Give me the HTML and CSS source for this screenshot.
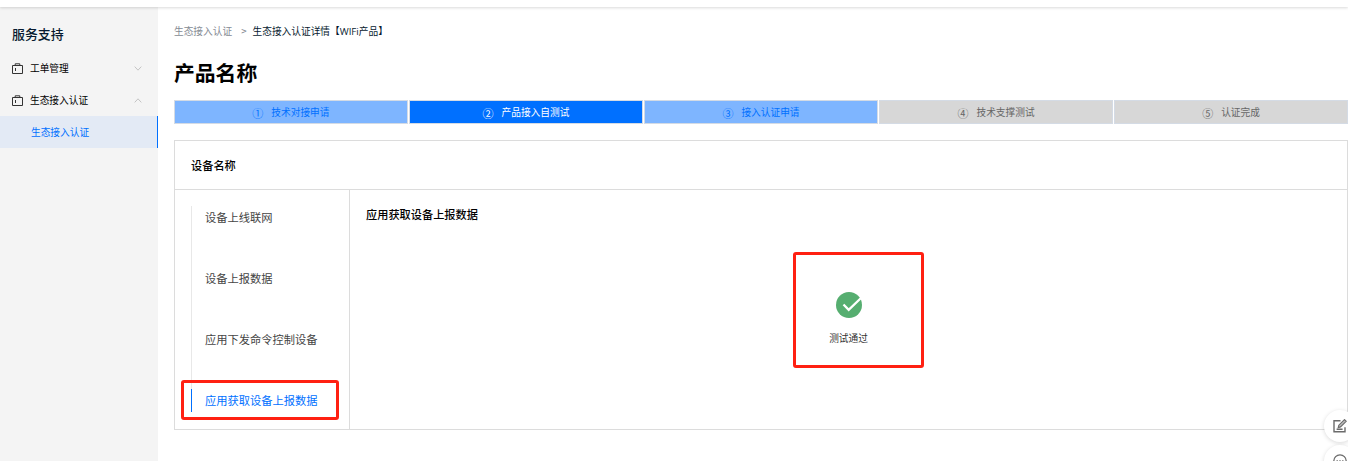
FILE: index.html
```html
<!DOCTYPE html>
<html lang="zh-CN">
<head>
<meta charset="utf-8">
<title>服务支持</title>
<link rel="stylesheet" href="styles.css">
</head>
<body>
<div class="topbar"></div>
<div class="layout">
  <aside class="sidebar">
    <h2 class="sidebar-title">服务支持</h2>
    <div class="menu-row">
      <svg class="menu-icon" viewBox="0 0 11 11"><path d="M.5 2.5h10v8H.5zM3.2 2.5V.8h4.6v1.7M3.5 5v3"/></svg>
      <span class="menu-label">工单管理</span>
      <svg class="chevron" viewBox="0 0 8 5"><path d="M.7.6 4 4.2 7.3.6"/></svg>
    </div>
    <div class="menu-row">
      <svg class="menu-icon" viewBox="0 0 11 11"><path d="M.5 2.5h10v8H.5zM3.2 2.5V.8h4.6v1.7M3.5 5v3"/></svg>
      <span class="menu-label">生态接入认证</span>
      <svg class="chevron" viewBox="0 0 8 5"><path d="M.7 4.4 4 .8l3.3 3.6"/></svg>
    </div>
    <div class="submenu active">生态接入认证</div>
  </aside>
  <main class="content">
    <nav class="crumbs"><span class="crumb-link">生态接入认证</span><span class="crumb-sep">&gt;</span><span>生态接入认证详情【<span class="latin">WIFi</span>产品】</span></nav>
    <h1 class="title">产品名称</h1>
    <div class="steps">
      <div class="step done"><span class="num">①</span><span>技术对接申请</span></div>
      <div class="step current"><span class="num">②</span><span>产品接入自测试</span></div>
      <div class="step done"><span class="num">③</span><span>接入认证申请</span></div>
      <div class="step"><span class="num">④</span><span>技术支撑测试</span></div>
      <div class="step"><span class="num">⑤</span><span>认证完成</span></div>
    </div>
    <section class="panel">
      <header class="panel-head">设备名称</header>
      <div class="panel-body">
        <ul class="tabs">
          <li class="tab">设备上线联网</li>
          <li class="tab">设备上报数据</li>
          <li class="tab">应用下发命令控制设备</li>
          <li class="tab selected">应用获取设备上报数据<span class="mark tab-mark"></span></li>
        </ul>
        <div class="detail">
          <h3 class="detail-title">应用获取设备上报数据</h3>
          <div class="result">
            <svg class="ok" viewBox="0 0 26 26"><circle cx="13" cy="13" r="13" fill="#56ae70"/><path d="M7.5 12.5l5.2 5.3L25 6" fill="none" stroke="#fff" stroke-width="2.3"/></svg>
            <span class="result-text">测试通过</span>
            <span class="mark result-mark"></span>
          </div>
        </div>
      </div>
    </section>
  </main>
</div>
<div class="float edit"><svg viewBox="0 0 14 14" width="14" height="14"><path d="M7.5 1.8H1v11h11V8.3M3.6 10.2h6" fill="none" stroke="#6b6b6b" stroke-width="1.4"/><path d="M5.2 8.6l.6-2.4L11.5.6l1.7 1.7-5.7 5.6z" fill="#bbb" stroke="#6b6b6b" stroke-width="1.1"/></svg></div>
<div class="float chat"><svg viewBox="0 0 14 14" width="14" height="14"><circle cx="7" cy="7" r="6.2" fill="none" stroke="#6b6b6b" stroke-width="1.3"/><path d="M3.5 7h1.4M6.3 7h1.4M9.1 7h1.4" stroke="#6b6b6b" stroke-width="1.3"/></svg></div>
</body>
</html>
```
FILE: styles.css
```css
* { box-sizing: border-box; }
body {
  margin: 0;
  height: 461px;
  overflow: hidden;
  position: relative;
  background: #fff;
  color: #000;
  font: 9.7px/16px "Noto Sans CJK SC", sans-serif;
}
h1, h2, h3, ul { margin: 0; padding: 0; }
svg { display: block; }
.topbar {
  height: 7px;
  position: relative;
  background: #fff;
  box-shadow: 0 1px 3px rgba(0, 0, 0, .15);
}
.layout { display: flex; height: 454px; }
.sidebar { width: 158px; background: #f4f4f4; padding-top: 17px; }
.sidebar-title {
  margin: 0 0 9px 12px;
  font-size: 12.9px;
  line-height: 19px;
  font-weight: 500;
  color: #071a2f;
}
.menu-row { display: flex; align-items: center; height: 32px; padding: 0 16px 0 12px; }
.menu-icon { width: 11px; height: 11px; fill: none; stroke: #333; stroke-width: 1; }
.menu-label { flex: 1; margin-left: 7px; }
.chevron { width: 8px; height: 5px; fill: none; stroke: #c4c4c4; stroke-width: 1; }
.submenu {
  height: 32px;
  padding-left: 31px;
  line-height: 32px;
  color: #0070ff;
  background: #e3eaf5;
  border-right: 1px solid #0070ff;
}
.content { flex: 1; padding: 16px 0 0 16px; }
.crumbs { height: 16px; color: #071a2f; white-space: nowrap; }
.crumb-link, .crumb-sep { color: #858b94; }
.crumb-sep { margin: 0 6px 0 9px; }
.latin { font-family: "Open Sans", sans-serif; line-height: 1; }
.title { margin: 18px 0 12px; font-size: 20.8px; line-height: 31px; font-weight: 700; }
.steps { display: grid; grid-template-columns: repeat(5, 1fr); gap: 1.2px; margin-bottom: 16px; }
.step {
  display: flex;
  justify-content: center;
  align-items: center;
  gap: 8px;
  height: 24px;
  background: #d7d7d7;
  border: 1px solid #d4dbe5;
  color: #666;
}
.num { position: relative; top: 1px; font-size: 11px; }
.step.done { background: #7eb5ff; color: #0070ff; }
.step.current { background: #0070ff; color: #fff; }
.panel { height: 290px; border: 1px solid #dcdcdc; }
.panel-head {
  height: 49px;
  padding-left: 16px;
  line-height: 48px;
  font-size: 11.2px;
  font-weight: 500;
  border-bottom: 1px solid #dcdcdc;
}
.panel-body { display: flex; height: 239px; }
.tabs {
  width: 175px;
  padding: 16px 0 0 16px;
  border-right: 1px solid #dcdcdc;
  list-style: none;
}
.tab {
  position: relative;
  height: 61px;
  padding-left: 13px;
  border-left: 1px solid #e8e8e8;
  font-size: 11.25px;
  line-height: 23px;
  color: #444;
}
.tab.selected { height: 23px; color: #0070ff; border-color: #0070ff; }
.detail { flex: 1; padding: 16px 0 0 16px; }
.detail-title { font-size: 11.2px; line-height: 16px; font-weight: 500; }
.result {
  position: relative;
  display: flex;
  flex-direction: column;
  align-items: center;
  margin: 70px 16px 0 0;
}
.ok { width: 26px; height: 26px; }
.result-text { margin-top: 12px; color: #333; }
.mark { position: absolute; border: 3px solid #ff2012; border-radius: 3px; }
.tab-mark { left: -11px; top: -9px; width: 158px; height: 40px; }
.result-mark { left: calc(50% - 56px); top: -40px; width: 131px; height: 116px; }
.float {
  position: absolute;
  left: 1324px;
  width: 32px;
  height: 32px;
  padding: 9px;
  border-radius: 50%;
  background: #fff;
  box-shadow: 0 1px 4px rgba(0, 0, 0, .15);
}
.edit { top: 410px; }
.chat { top: 445px; }
```
